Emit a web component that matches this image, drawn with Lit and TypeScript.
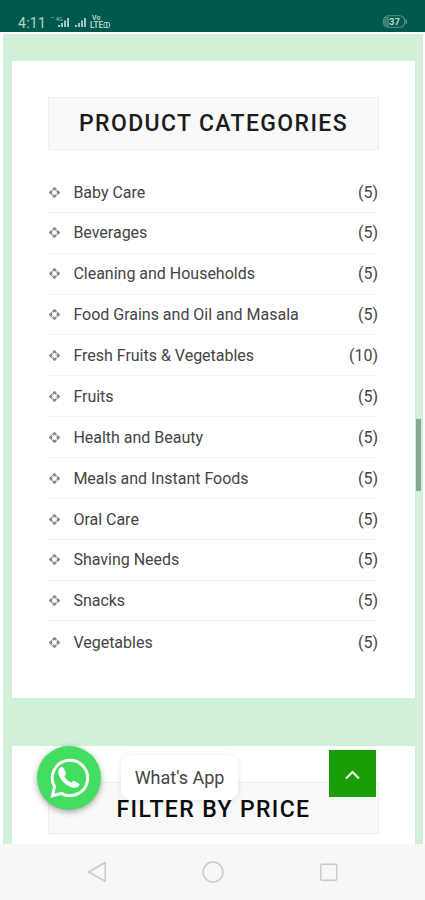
import { LitElement, html, css, svg } from "lit";
import { customElement } from "lit/decorators.js";

const categories: [string, number][] = [
  ["Baby Care", 5],
  ["Beverages", 5],
  ["Cleaning and Households", 5],
  ["Food Grains and Oil and Masala", 5],
  ["Fresh Fruits & Vegetables", 10],
  ["Fruits", 5],
  ["Health and Beauty", 5],
  ["Meals and Instant Foods", 5],
  ["Oral Care", 5],
  ["Shaving Needs", 5],
  ["Snacks", 5],
  ["Vegetables", 5],
];

const bars = (x: number) => svg`
  <path d="M${x} 14v-2M${x + 3} 14v-4M${x + 6} 14v-6.500M${x + 9} 14v-9"
    stroke="#b5d3ce" stroke-width="1.800" fill="none"/>`;

@customElement("app-root")
export class AppRoot extends LitElement {
  static styles = css`
    :host {
      display: flex;
      flex-direction: column;
      position: relative;
      width: 425px;
      height: 900px;
      overflow: hidden;
      background: #fff;
      font-family: Roboto, sans-serif;
      color: #444;
    }
    * { box-sizing: border-box; }
    svg { display: block; }
    .status {
      flex: none;
      height: 32px;
      padding: 13px 17px 0 18px;
      background: #00594c;
      display: flex;
      justify-content: space-between;
      align-items: flex-start;
      color: #b5d3ce;
    }
    .left { display: flex; }
    .time { font-size: 14px; line-height: 20px; width: 32px; letter-spacing: 0.3px; }
    .battery { margin-top: 2px; }
    .page {
      flex: none;
      height: 810px;
      margin: 2px 2px 0 3px;
      padding: 27px 8px 0 9px;
      background: #d1f0d9;
      overflow: hidden;
    }
    .card { background: #fff; padding: 36px 36px 0; }
    .first { height: 637px; }
    .second { height: 98px; margin-top: 48px; }
    h2 {
      margin: 0;
      height: 53px;
      border: 1px solid #eeeeee;
      background: #f9f9f9;
      display: flex;
      align-items: center;
      justify-content: center;
      font-size: 23px;
      font-weight: 500;
      line-height: 50px;
      letter-spacing: 1.37px;
      color: #1c1c1c;
      white-space: nowrap;
    }
    .second h2 { height: 52px; color: #0c0c0c; }
    .second h2 span { position: relative; z-index: 1; padding-top: 3px; }
    ul { list-style: none; margin: 22px 0 0; padding: 0 1px 0 0; }
    li {
      display: flex;
      align-items: center;
      height: 40.86px;
      padding-top: 0.4px;
      font-size: 16px;
      letter-spacing: -0.01px;
      border-bottom: 1px solid #f3f3f3;
    }
    li:last-child { border-bottom: none; }
    .name { flex: 1; margin-left: 12.4px; white-space: nowrap; }
    .nav {
      flex: none;
      height: 56px;
      background: #f7f7f7;
      display: flex;
      justify-content: space-between;
      padding: 16px 85px 0 86px;
    }
    .scroll {
      position: absolute;
      left: 416px;
      top: 419px;
      width: 5px;
      height: 72px;
      background: #87a892;
    }
    .whatsapp {
      position: absolute;
      left: 37px;
      top: 746px;
      width: 64px;
      height: 64px;
      border-radius: 50%;
      background: #43dd62;
      box-shadow: 0 2px 6px rgba(0, 0, 0, 0.35);
    }
    .bubble {
      position: absolute;
      left: 121px;
      top: 755px;
      width: 117px;
      height: 45px;
      border-radius: 10px;
      background: #fff;
      box-shadow: 0 1px 7px rgba(0, 0, 0, 0.1);
      font-size: 18px;
      line-height: 46px;
      text-align: center;
      z-index: 0;
    }
    .top {
      position: absolute;
      left: 329px;
      top: 750px;
      width: 47px;
      height: 47px;
      background: #1b9d05;
    }
  `;

  render() {
    return html`
      <div class="status">
        <div class="left">
          <span class="time">4:11</span>
          <svg width="62" height="18" viewBox="0 0 62 18">
            <path d="M1 4.500h3" stroke="#4d8c82" />
            <text x="5.500" y="8" font-size="6" fill="#94bab4">4G</text>
            ${bars(9)} ${bars(26)}
            <text x="42" y="6.500" font-size="7" font-weight="700" fill="#b5d3ce">Vo</text>
            <text x="40" y="15" font-size="8.500" font-weight="700" textLength="13" lengthAdjust="spacingAndGlyphs" fill="#b5d3ce">LTE</text>
            <rect x="54" y="9.500" width="5.500" height="5" rx="1" fill="none" stroke="#b5d3ce" />
            <path d="M56.800 10v4" stroke="#b5d3ce" />
          </svg>
        </div>
        <svg class="battery" width="26" height="14" viewBox="0 0 26 14">
          <rect x="1.300" y=".8" width="21.500" height="11.500" rx="5" fill="none" stroke="#5c958b" stroke-width="1.100" />
          <path d="M7 1a5.500 5.500 0 0 0 0 11z" fill="#3f8175" />
          <path d="M24.300 4.500v4" stroke="#6da097" stroke-width="1.300" />
          <text x="12.500" y="10.200" font-size="9.500" font-weight="700" text-anchor="middle" fill="#bddad5">37</text>
        </svg>
      </div>
      <div class="page">
        <section class="card first">
          <h2>PRODUCT CATEGORIES</h2>
          <ul>
            ${categories.map(
              ([name, count]) => html`<li>
                <svg width="13" height="13" viewBox="0 0 13 13" fill="#888">
                  <path d="M6.500.7 9 3.200 7.700 4.800 6.500 3.800 5.300 4.800 4 3.200zM6.500 12.300 9 9.800 7.700 8.200 6.500 9.200 5.300 8.200 4 9.800zM.7 6.500 3.200 4 4.800 5.300 3.800 6.500 4.800 7.700 3.200 9zM12.300 6.500 9.800 4 8.200 5.300 9.200 6.500 8.200 7.700 9.800 9z" />
                </svg>
                <span class="name">${name}</span><span>(${count})</span>
              </li>`
            )}
          </ul>
        </section>
        <section class="card second">
          <h2><span>FILTER BY PRICE</span></h2>
        </section>
      </div>
      <div class="nav">
        <svg width="22" height="24" viewBox="0 0 22 24" fill="none" stroke="#c9c9c9" stroke-width="1.500">
          <path d="M2.500 12 19.300 2.500v18.800z" stroke-linejoin="round" />
        </svg>
        <svg width="24" height="24" viewBox="0 0 24 24" fill="none" stroke="#c9c9c9" stroke-width="1.500">
          <circle cx="12" cy="12" r="10" />
        </svg>
        <svg width="22" height="24" viewBox="0 0 22 24" fill="none" stroke="#c9c9c9" stroke-width="1.500">
          <rect x="2.800" y="4.200" width="16" height="16" rx="1" />
        </svg>
      </div>
      <div class="scroll"></div>
      <div class="bubble">What's App</div>
      <div class="whatsapp">
        <svg width="64" height="64" viewBox="0 0 64 64">
          <path d="M15.500 49.800 17.500 40.600A17.700 17.700 0 1 1 24.300 47.400z" fill="none" stroke="#fff" stroke-width="3" />
          <path d="M23.300 21.600C25 20.400 26.300 21 26.900 22.600L28.700 26.600C29.200 28 28.500 28.800 27.300 30.200C29.200 33.300 31.300 35.300 34.300 36.700C35.500 35.300 36.300 34.600 37.700 35.200L41.500 37.200C43 38 42.600 39.300 41.600 40.300C39.500 42.300 36.700 42.300 33.700 41C27.500 38.500 23.200 33.500 21.600 28.500C20.800 25.800 21.500 23 23.300 21.600Z" fill="#fff" />
        </svg>
      </div>
      <div class="top">
        <svg width="47" height="47" viewBox="0 0 47 47">
          <path d="m17 28.500 6.500-6.500 6.500 6.500" fill="none" stroke="#e6f7e2" stroke-width="2.200" />
        </svg>
      </div>
    `;
  }
}
